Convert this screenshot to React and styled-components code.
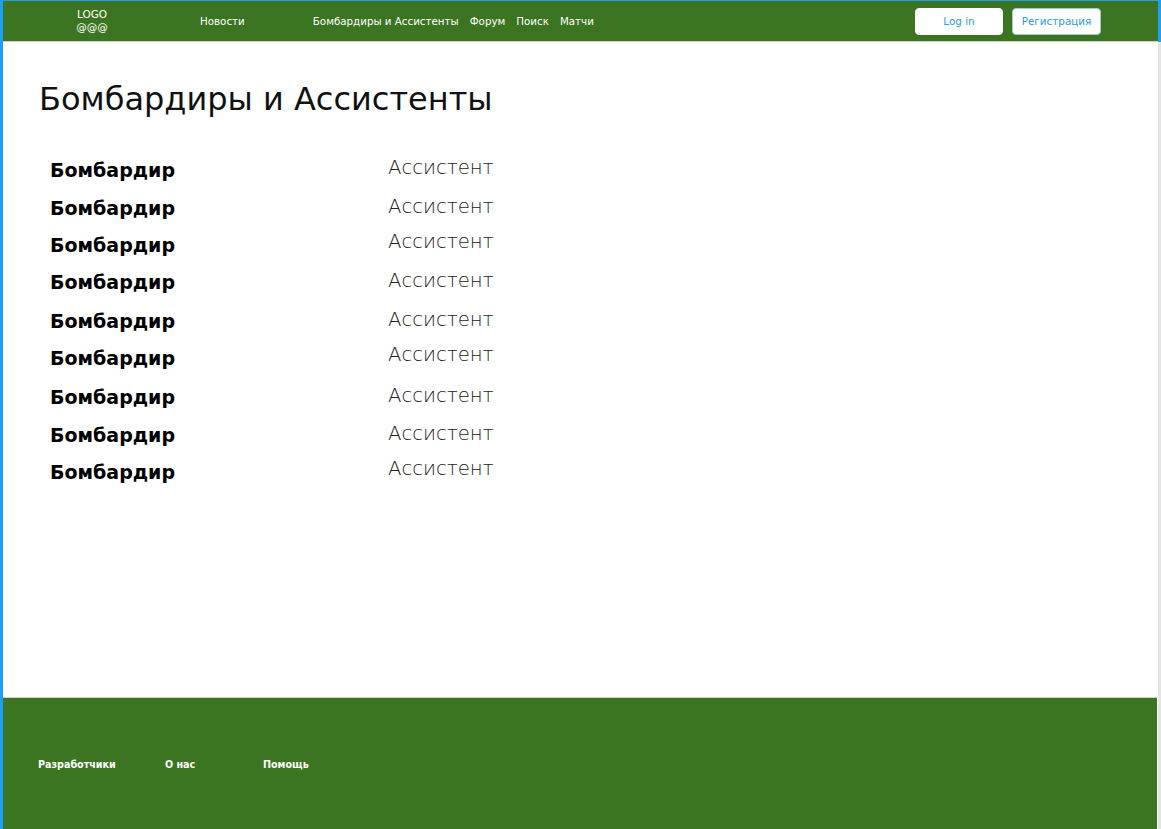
import React from "react";
import styled, { createGlobalStyle } from "styled-components";

const GREEN = "#3b7521";
const BLUE = "#1e9ff2";
const FONT = '"DejaVu Sans", "Noto Sans", sans-serif';

const Global = createGlobalStyle`
  html, body { margin: 0; padding: 0; background: #fff; }
  body { font-family: ${FONT}; }
  * { box-sizing: border-box; }
`;

const Shell = styled.div`
  display: flex;
  width: 1161px;
  min-height: 829px;
`;

const Frame = styled.div`
  flex: 1;
  display: flex;
  flex-direction: column;
  border-left: 3px solid ${BLUE};
  border-top: 1px solid ${BLUE};
`;

const ScrollStrip = styled.div`
  width: 3px;
  background: linear-gradient(${BLUE} 0 42px, #e4e4e4 42px);
`;

const Header = styled.header`
  height: 41px;
  display: flex;
  align-items: center;
  background: ${GREEN};
  border-bottom: 1px solid #c9d8c2;
  padding: 0 57px 0 71px;
  color: #fff;
`;

const Logo = styled.div`
  width: 36px;
  text-align: center;
  font-size: 10.5px;
  line-height: 13px;
  margin-right: 90px;
  margin-top: -1px;
`;

const Nav = styled.nav`
  display: flex;
  align-items: center;
  gap: 11px;
  font-size: 10.3px;
`;

const NavLink = styled.a`
  color: #fff;
  text-decoration: none;
  margin-right: ${(p) => p.$after || 0}px;
`;

const Actions = styled.div`
  margin-left: auto;
  display: flex;
  gap: 9px;
`;

const Button = styled.button`
  width: ${(p) => p.$w}px;
  height: 27px;
  background: #fff;
  border: 1px solid ${(p) => (p.$outlined ? "#9ccfcf" : "#ffffff")};
  border-radius: 4px;
  color: #2a9bea;
  font-family: ${FONT};
  font-size: 10.4px;
  padding: 0;
`;

const Main = styled.main`
  flex: 1;
  padding: 35px 0 0 36px;
`;

const Title = styled.h1`
  margin: 0 0 37px;
  font-size: 32px;
  font-weight: 400;
  line-height: 44px;
  color: #111;
`;

const Table = styled.div`
  display: flex;
  flex-direction: column;
  padding-left: 11px;
`;

const Row = styled.div`
  display: flex;
  height: ${(p) => p.$h}px;
  align-items: flex-start;
`;

const Scorer = styled.div`
  width: 338px;
  font-size: 19px;
  font-weight: 700;
  line-height: 24px;
  color: #000;
`;

const Assist = styled.div`
  font-size: 19.7px;
  font-weight: 300;
  line-height: 24px;
  color: #222;
  margin-top: ${(p) => -p.$shift}px;
`;

const Footer = styled.footer`
  height: 132px;
  background: ${GREEN};
  border-top: 1px solid #c9d8c2;
  display: flex;
  align-items: center;
  padding: 0 0 0 35px;
  margin-right: 1px;
`;

const FooterLink = styled.a`
  color: #fff;
  font-size: 9.6px;
  font-weight: 700;
  text-decoration: none;
  width: ${(p) => p.$w}px;
  margin-top: 2px;
`;

const rows = [
  { h: 38, shift: 2 },
  { h: 37, shift: 1 },
  { h: 37, shift: 3 },
  { h: 39, shift: 1 },
  { h: 37, shift: 1 },
  { h: 39, shift: 3 },
  { h: 38, shift: 1 },
  { h: 37, shift: 1 },
  { h: 37, shift: 3 },
];

export default function App() {
  return (
    <>
      <Global />
      <Shell>
        <Frame>
          <Header>
            <Logo>
              LOGO
              <br />
              @@@
            </Logo>
            <Nav>
              <NavLink href="#" $after={57}>Новости</NavLink>
              <NavLink href="#">Бомбардиры и Ассистенты</NavLink>
              <NavLink href="#">Форум</NavLink>
              <NavLink href="#">Поиск</NavLink>
              <NavLink href="#">Матчи</NavLink>
            </Nav>
            <Actions>
              <Button $w={88}>Log in</Button>
              <Button $w={89} $outlined>Регистрация</Button>
            </Actions>
          </Header>
          <Main>
            <Title>Бомбардиры и Ассистенты</Title>
            <Table>
              {rows.map((r, i) => (
                <Row key={i} $h={r.h}>
                  <Scorer>Бомбардир</Scorer>
                  <Assist $shift={r.shift}>Ассистент</Assist>
                </Row>
              ))}
            </Table>
          </Main>
          <Footer>
            <FooterLink href="#" $w={127}>Разработчики</FooterLink>
            <FooterLink href="#" $w={98}>О нас</FooterLink>
            <FooterLink href="#" $w={80}>Помощь</FooterLink>
          </Footer>
        </Frame>
        <ScrollStrip />
      </Shell>
    </>
  );
}
